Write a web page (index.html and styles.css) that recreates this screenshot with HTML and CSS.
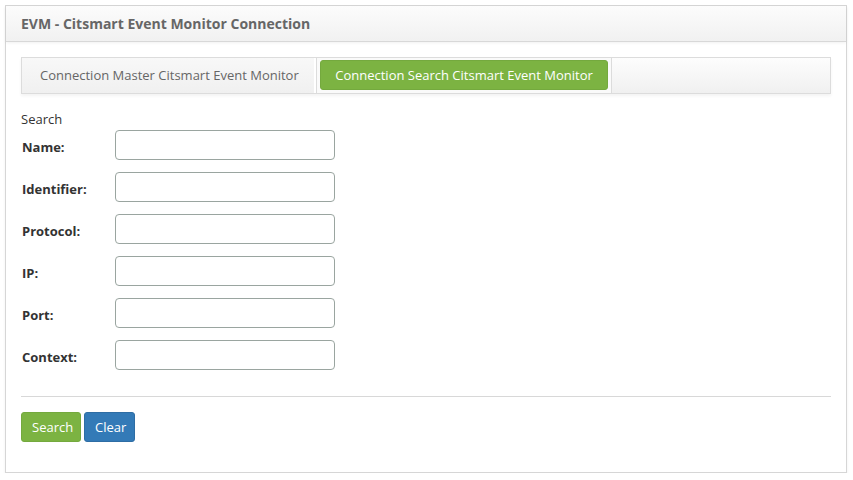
FILE: index.html
```html
<!DOCTYPE html>
<html>
<head>
<meta charset="utf-8">
<link rel="stylesheet" href="styles.css">
</head>
<body>
<div class="panel">
  <div class="panel-head">EVM - Citsmart Event Monitor Connection</div>
  <div class="panel-body">
    <div class="tabs">
      <div class="tab">Connection Master Citsmart Event Monitor</div>
      <div class="tab tab-active"><span class="tab-btn">Connection Search Citsmart Event Monitor</span></div>
    </div>
    <div class="form">
      <div class="legend">Search</div>
      <div class="row"><label>Name:</label><input type="text"></div>
      <div class="row"><label>Identifier:</label><input type="text"></div>
      <div class="row"><label>Protocol:</label><input type="text"></div>
      <div class="row"><label>IP:</label><input type="text"></div>
      <div class="row"><label>Port:</label><input type="text"></div>
      <div class="row"><label>Context:</label><input type="text"></div>
    </div>
    <div class="divider"></div>
    <div class="actions">
      <button class="btn btn-green">Search</button>
      <button class="btn btn-blue">Clear</button>
    </div>
  </div>
</div>
</body>
</html>
```
FILE: styles.css
```css
* { box-sizing: border-box; }
body {
  margin: 0;
  padding: 5px 6px 0 5px;
  background: #fff;
  font-family: "Open Sans", "Liberation Sans", sans-serif;
  font-size: 13px;
  color: #333;
}
.panel {
  border: 1px solid #d6d6d6;
  height: 468px;
  box-shadow: 0 2px 3px rgba(0,0,0,0.06);
}
.panel-head {
  height: 36px;
  padding: 0 15px 1px;
  display: flex;
  align-items: center;
  font-weight: bold;
  font-size: 14px;
  color: #666;
  background: linear-gradient(#fcfcfc, #f1f1f1);
  border-bottom: 1px solid #d8d8d8;
  box-shadow: 0 1px 3px rgba(0,0,0,0.06);
}
.panel-body {
  padding: 15px 15px 0 15px;
}
.tabs {
  display: flex;
  height: 37px;
  border: 1px solid #dcdcdc;
  background: linear-gradient(#fdfdfd, #f0f0f0);
  box-shadow: 0 2px 3px rgba(0,0,0,0.05);
}
.tab {
  display: flex;
  align-items: center;
  white-space: nowrap;
  color: #666;
}
.tab:first-child {
  background: linear-gradient(#f8f8f8, #f0f0f0);
  width: 294px;
  padding: 0 18px 2px;
  border-right: 2px solid #fff;
  box-shadow: 1px 0 0 #dcdcdc;
}
.tab-active {
  padding: 2px 3px 3px;
  background: #fafafa;
  margin-left: 1px;
  border-right: 1px solid #dcdcdc;
}
.tab-btn {
  display: flex;
  align-items: center;
  height: 30px;
  width: 288px;
  justify-content: center;
  padding-bottom: 1px;
  background: #7cb342;
  color: #fff;
  border-radius: 3px;
  border: 1px solid #74a93e;
}
.form {
  padding-top: 16px;
}
.legend {
  line-height: 18px;
  margin-bottom: 2px;
}
.row {
  display: flex;
  align-items: center;
  height: 30px;
  margin-bottom: 12px;
}
.row label {
  width: 94px;
  padding-left: 1px;
  padding-top: 4px;
  font-weight: bold;
  color: #333;
}
.row input {
  width: 220px;
  height: 30px;
  border: 1px solid #9aa5a0;
  border-radius: 4px;
  background: #fff;
  margin: 0;
}
.divider {
  border-top: 1px solid #d8d8d8;
  margin-top: 26px;
}
.actions {
  display: flex;
  gap: 3px;
  padding-top: 15px;
}
.btn {
  height: 30px;
  font-family: "Open Sans", "Liberation Sans", sans-serif;
  font-size: 13px;
  color: #fff;
  border-radius: 3px;
  padding: 0 10px;
  cursor: pointer;
}
.btn-green { background: #7cb342; border: 1px solid #74a93e; width: 60px; }
.btn-blue { background: #337ab7; border: 1px solid #2e6da4; width: 51px; }
```
